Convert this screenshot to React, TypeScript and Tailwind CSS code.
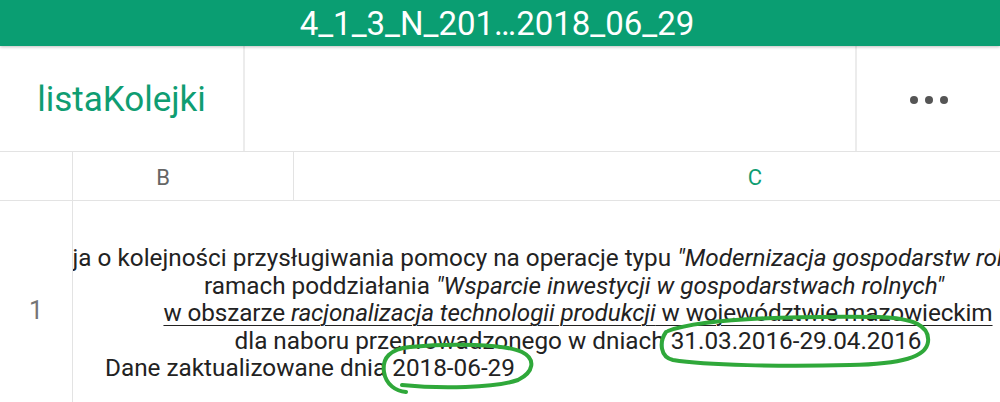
export default function App() {
  return (
    <div className="relative w-[1000px] h-[402px] overflow-hidden bg-white font-['Roboto',sans-serif]">
      {/* title bar */}
      <div className="relative z-10 h-[46px] bg-[#0a9e72] flex items-center justify-center text-white text-[33px] leading-none pr-[6px] shadow-[0_1px_3px_rgba(0,0,0,0.25)]">
        4_1_3_N_201…2018_06_29
      </div>

      {/* sheet tabs bar */}
      <div className="h-[106px] flex border-b border-[#e3e3e3]">
        <div className="w-[245px] shrink-0 border-r-2 border-[#ececec] flex items-center justify-center text-[#0f9d72] text-[35px] leading-none pt-[2px]">
          listaKolejki
        </div>
        <div className="flex-1 border-r-2 border-[#ececec]" />
        <div className="w-[143px] shrink-0 flex items-center justify-center gap-[7px] pt-[2px]">
          <span className="w-[8px] h-[8px] rounded-full bg-[#555555]" />
          <span className="w-[8px] h-[8px] rounded-full bg-[#555555]" />
          <span className="w-[8px] h-[8px] rounded-full bg-[#555555]" />
        </div>
      </div>

      {/* column headers */}
      <div className="h-[49px] flex border-b border-[#e3e3e3] overflow-hidden">
        <div className="w-[73px] shrink-0 border-r border-[#e3e3e3]" />
        <div className="w-[221px] shrink-0 border-r border-[#e3e3e3] flex items-center justify-center pr-[40px] pt-[3px] text-[22px] text-[#666666]">
          B
        </div>
        <div className="w-[922px] shrink-0 flex items-center justify-center pt-[3px] text-[22px] text-[#0f9d72]">
          C
        </div>
      </div>

      {/* row 1 */}
      <div className="h-[220px] flex overflow-hidden">
        <div className="w-[73px] shrink-0 border-r border-[#e3e3e3] flex items-center justify-center text-[25px] text-[#757575]">
          1
        </div>
        <div className="flex-1 overflow-hidden flex items-center">
          <div className="w-[1010px] shrink-0 flex flex-col text-[24.3px] leading-[27.5px] text-[#222222] whitespace-nowrap pt-[4px]">
            <div className="flex justify-center">
              <span className="pr-[123px]">
                Informacja o kolejności przysługiwania pomocy na operacje typu{" "}
                <i>"Modernizacja gospodarstw rolnych"</i>
              </span>
            </div>
            <div className="flex justify-center">
              <span className="pr-[8px]">
                ramach poddziałania <i>"Wsparcie inwestycji w gospodarstwach rolnych"</i>
              </span>
            </div>
            <div className="flex justify-center">
              <span className="underline underline-offset-[4px] decoration-1 tracking-[-0.1px]">
                w obszarze <i>racjonalizacja technologii produkcji</i> w województwie mazowieckim{" "}
              </span>
            </div>
            <div className="flex justify-center">
              <span>dla naboru przeprowadzonego w dniach 31.03.2016-29.04.2016</span>
            </div>
            <div className="flex pl-[32px]">
              <span>Dane zaktualizowane dnia 2018-06-29</span>
            </div>
          </div>
        </div>
      </div>

      {/* hand-drawn annotations */}
      <svg
        className="absolute left-0 top-0 pointer-events-none"
        width="1000"
        height="402"
        viewBox="0 0 1000 402"
        fill="none"
        stroke="#2fa83a"
        strokeWidth="4"
        strokeLinecap="round"
        strokeLinejoin="round"
      >
        <path d="M668 331 C 700 319, 790 316, 878 317 C 914 318, 930 326, 928 342 C 926 357, 902 364, 850 365 C 780 367, 705 365, 673 360 C 660 357, 659 342, 666 332" />
        <path d="M406 392 C 396 391, 386 385, 384 372 C 382 358, 390 349, 410 347 C 450 343, 505 344, 522 352 C 536 359, 534 372, 518 380 C 495 388, 440 389, 402 385" />
      </svg>
    </div>
  );
}
